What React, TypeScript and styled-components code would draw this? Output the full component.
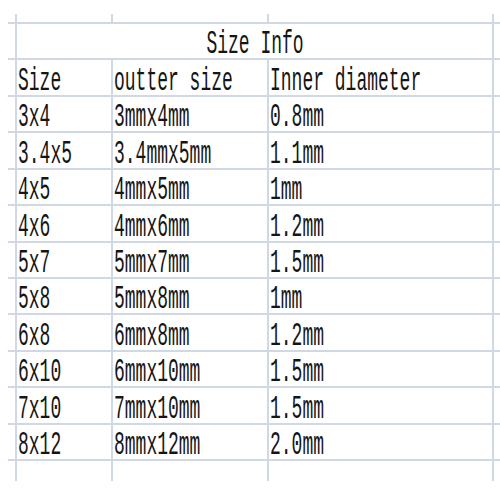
import React from "react";
import styled, { createGlobalStyle } from "styled-components";

const Global = createGlobalStyle`
  html, body { margin: 0; padding: 0; background: #ffffff; }
  body { width: 500px; height: 500px; overflow: hidden; }
`;

const LINE = "#d0d7e5";

const Sheet = styled.div`
  padding: 14px 0 0 8px;
  width: 492px;
`;

const Row = styled.div<{ $h: number; $top?: boolean }>`
  display: grid;
  grid-template-columns: 7px 96px 156px 225px 8px;
  height: ${(p) => p.$h}px;
  box-sizing: border-box;
  border-top: ${(p) => (p.$top ? `2px solid ${LINE}` : "none")};
`;

const Stub = styled.div``;

const Cell = styled.div<{ $span?: number; $center?: boolean }>`
  grid-column: span ${(p) => p.$span ?? 1};
  border-left: 2px solid ${LINE};
  box-sizing: border-box;
  display: flex;
  align-items: flex-end;
  justify-content: ${(p) => (p.$center ? "center" : "flex-start")};
  padding: 0 0 1px 1px;
  overflow: visible;
  white-space: pre;
`;

const Text = styled.span`
  display: inline-block;
  font-family: "Liberation Mono", "DejaVu Sans Mono", monospace;
  font-size: 18px;
  line-height: 18px;
  height: 18px;
  color: #151515;
  transform: scaleY(1.8);
  transform-origin: 50% 14px;
`;

const rows: [string, string, string][] = [
  ["Size", "outter size", "Inner diameter"],
  ["3x4", "3mmx4mm", "0.8mm"],
  ["3.4x5", "3.4mmx5mm", "1.1mm"],
  ["4x5", "4mmx5mm", "1mm"],
  ["4x6", "4mmx6mm", "1.2mm"],
  ["5x7", "5mmx7mm", "1.5mm"],
  ["5x8", "5mmx8mm", "1mm"],
  ["6x8", "6mmx8mm", "1.2mm"],
  ["6x10", "6mmx10mm", "1.5mm"],
  ["7x10", "7mmx10mm", "1.5mm"],
  ["8x12", "8mmx12mm", "2.0mm"],
];

// heights between successive horizontal grid lines (title row first)
const heights = [36, 37, 36, 37, 36, 37, 36, 36, 37, 36, 37, 36];

export default function App() {
  return (
    <>
      <Global />
      <Sheet>
        <Row $h={8}>
          <Stub />
          <Cell />
          <Cell />
          <Cell />
          <Cell />
        </Row>
        <Row $h={heights[0]} $top>
          <Stub />
          <Cell $span={3} $center>
            <Text>Size Info</Text>
          </Cell>
          <Cell />
        </Row>
        {rows.map((r, i) => (
          <Row key={i} $h={heights[i + 1]} $top>
            <Stub />
            <Cell>
              <Text>{r[0]}</Text>
            </Cell>
            <Cell>
              <Text>{r[1]}</Text>
            </Cell>
            <Cell>
              <Text>{r[2]}</Text>
            </Cell>
            <Cell />
          </Row>
        ))}
        <Row $h={22} $top>
          <Stub />
          <Cell />
          <Cell />
          <Cell />
          <Cell />
        </Row>
      </Sheet>
    </>
  );
}
